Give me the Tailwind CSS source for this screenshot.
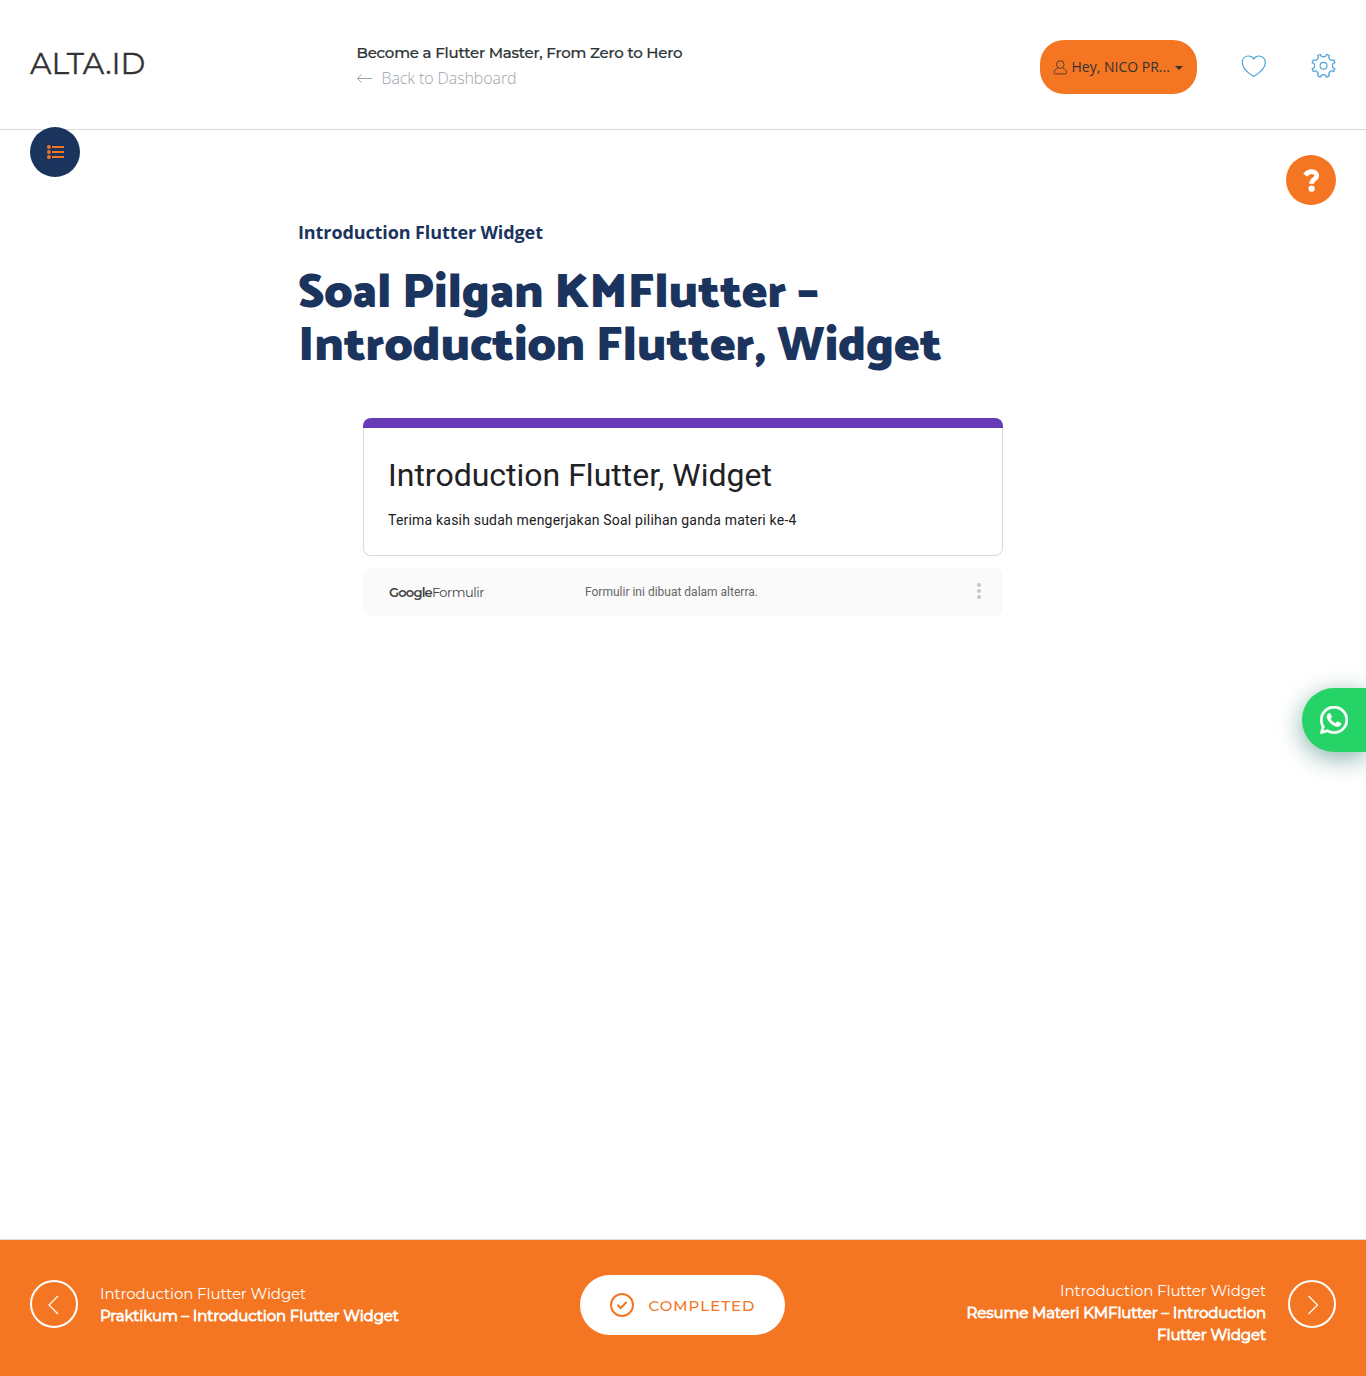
<!DOCTYPE html>
<html lang="id">
<head>
<meta charset="utf-8">
<title>ALTA.ID</title>
<script src="https://cdn.jsdelivr.net/npm/@tailwindcss/browser@4"></script>
</head>
<body class="relative flex h-[1376px] w-[1366px] flex-col overflow-hidden bg-white font-['Open_Sans',sans-serif]">

  <header class="flex h-[130px] shrink-0 items-start border-b border-[#dadada] px-[30px]">
    <div class="mt-[44px] w-[326.500px] font-[Montserrat,Inter,sans-serif] text-[30px] leading-[40px] tracking-[-0.1px] text-[#333] [-webkit-text-stroke:0.3px]">ALTA.ID</div>
    <div class="mt-[41px] w-[683.500px]">
      <div class="whitespace-nowrap font-[Montserrat,Inter,sans-serif] text-[15px] font-medium leading-[24px] tracking-[-0.21px] text-[#2d3436] [-webkit-text-stroke:0.2px]">Become a Flutter Master, From Zero to Hero</div>
      <a class="mt-px flex items-center gap-[9px] text-base font-light leading-[24px] text-[#a0a3ac]">
        <svg class="h-4 w-4" viewBox="0 0 16 16" fill="none" stroke="currentColor" stroke-width="1"><path d="M15 8.5H0.500M4.500 4.500L0.500 8.500L4.500 12.500"/></svg>
        <span class="tracking-[-0.1px]">Back to Dashboard</span>
      </a>
    </div>
    <button class="mt-10 flex h-[54px] w-[157px] items-center rounded-[24px] bg-[#f47622] pl-[13px] text-sm text-[#333]">
      <svg class="h-[15px] w-[15px]" viewBox="0 0 15 15" fill="none" stroke="currentColor" stroke-width="0.8"><circle cx="7.3" cy="4.5" r="3.8"/><path d="M5 8.2C2.500 9 1.100 10.400 1.100 12.600Q1.100 13.900 2.400 13.900H12.200Q13.500 13.900 13.500 12.600C13.500 10.400 12.100 9 9.600 8.200"/></svg>
      <span class="ml-[3.500px] whitespace-nowrap">Hey, NICO PR...</span>
      <svg class="ml-[5.500px] mt-[2px] h-1 w-2" viewBox="0 0 8 4" fill="currentColor"><path d="M0 0H8L4 4Z"/></svg>
    </button>
    <svg class="ml-[44px] mt-[53px] h-[26px] w-[26px] shrink-0" viewBox="0 0 26 26" fill="none" stroke="#4fa3d9" stroke-width="1.200"><path d="M12.700 6C11.500 4 9.700 3 7.500 3C3.700 3 1.300 5.800 1.300 9.400C1.300 14.800 7.500 20.300 12.700 23.400C17.900 20.300 24.300 14.800 24.300 9.400C24.300 5.800 21.700 3 18 3C15.700 3 13.900 4 12.700 6Z"/></svg>
    <svg class="ml-[43px] mt-[53px] h-[26px] w-[26px] shrink-0" viewBox="-13.5 -12.7 26 26" fill="none" stroke="#4fa3d9" stroke-width="1.200" stroke-linejoin="round"><circle r="3.400"/><path d="M-3.050 -11.400A3.100 3.100 0 0 0 3.050 -11.400L5.900 -10.200A3.100 3.100 0 0 0 10.200 -5.900L11.400 -3.050A3.100 3.100 0 0 0 11.400 3.050L10.200 5.900A3.100 3.100 0 0 0 5.900 10.200L3.050 11.400A3.100 3.100 0 0 0 -3.050 11.400L-5.900 10.200A3.100 3.100 0 0 0 -10.200 5.900L-11.400 3.050A3.100 3.100 0 0 0 -11.400 -3.050L-10.200 -5.900A3.100 3.100 0 0 0 -5.900 -10.200Z"/></svg>
  </header>

  <main class="flex-1 pt-[88px]">
    <div class="ml-[298px] w-[770px]">
      <p class="text-lg font-bold leading-[28px] tracking-[-0.1px] text-[#1a345e]">Introduction Flutter Widget</p>
      <h1 class="mt-[21px] whitespace-nowrap font-[Catamaran,'Open_Sans',sans-serif] text-[48px] font-black leading-[53px] text-[#1a345e]">Soal Pilgan KMFlutter –<br>Introduction Flutter, Widget</h1>
    </div>
    <section class="ml-[363px] mt-[45px] w-[640px] font-[Roboto,sans-serif]">
      <div class="h-[10px] rounded-t-lg bg-[#673ab7]"></div>
      <div class="h-[128px] rounded-b-lg border border-t-0 border-[#dadce0] px-[24px] pt-[27px]">
        <h2 class="text-[32px] leading-[40px] text-[#202124]">Introduction Flutter, Widget</h2>
        <p class="mt-[15px] text-sm leading-[20px] tracking-[0.2px] text-[#202124]">Terima kasih sudah mengerjakan Soal pilihan ganda materi ke-4</p>
      </div>
      <div class="mt-3 flex h-12 items-center rounded-lg bg-[#fafafa] pl-[26px] pr-[22px] text-xs text-[#666]">
        <div class="w-[196px] whitespace-nowrap font-[Montserrat,Lato,sans-serif] text-[13px] leading-5 text-[#444]"><span class="font-semibold tracking-[-0.8px]">Google</span><span class="tracking-[-0.5px]">Formulir</span></div>
        <span>Formulir ini dibuat dalam alterra.</span>
        <svg class="mb-0.5 ml-auto h-4 w-1" viewBox="0 0 4 16" fill="#c6c6c6"><circle cx="2" cy="2" r="2"/><circle cx="2" cy="8" r="2"/><circle cx="2" cy="14" r="2"/></svg>
      </div>
    </section>
  </main>

  <footer class="flex h-[137px] shrink-0 items-start border-t border-[#e0dcd8] bg-[#f47622] px-[30px] font-[Montserrat,Inter,sans-serif] text-[15px] leading-[22px] text-white">
    <svg class="mt-10 h-12 w-12" viewBox="0 0 48 48" fill="none" stroke="currentColor"><circle cx="24" cy="24" r="23" stroke-width="2"/><path d="M28 16L19 25L28 34" stroke-width="1.200"/></svg>
    <div class="ml-[22px] mt-[43px] w-[480px] whitespace-nowrap"><div class="tracking-[-0.1px]">Introduction Flutter Widget</div><div class="tracking-[-0.1px] [-webkit-text-stroke:0.8px]">Praktikum – Introduction Flutter Widget</div></div>
    <button class="mt-[35px] flex h-[60px] w-[205px] items-center rounded-[30px] bg-white pl-[29px] text-[#f47622]">
      <svg class="h-[26px] w-[26px]" viewBox="0 0 26 26" fill="none" stroke="currentColor" stroke-width="2"><circle cx="13" cy="13" r="11"/><path d="M8.500 12.800L11.700 16L17.600 10"/></svg>
      <span class="ml-[13.5px] mt-0.5 font-medium tracking-[1px]">COMPLETED</span>
    </button>
    <div class="ml-auto mt-10 whitespace-nowrap text-right"><div class="tracking-[-0.1px]">Introduction Flutter Widget</div><div class="tracking-[-0.1px] [-webkit-text-stroke:0.8px]">Resume Materi KMFlutter – Introduction<br>Flutter Widget</div></div>
    <svg class="ml-[22px] mt-10 h-12 w-12" viewBox="0 0 48 48" fill="none" stroke="currentColor"><circle cx="24" cy="24" r="23" stroke-width="2"/><path d="M20.500 16L29.500 25L20.500 34" stroke-width="1.200"/></svg>
  </footer>

  <button class="absolute left-[30px] top-[127px] flex h-[50px] w-[50px] items-center justify-center rounded-full bg-[#1a345e]">
    <svg class="h-[14px] w-[17px]" viewBox="0 0 17 14" fill="#f47622"><circle cx="1.900" cy="2" r="1.900"/><circle cx="1.900" cy="7" r="1.900"/><circle cx="1.900" cy="12" r="1.900"/><path d="M5 1H17V3H5ZM5 6H17V8H5ZM5 11H17V13H5Z"/></svg>
  </button>
  <button class="absolute left-[1286px] top-[155px] flex h-[50px] w-[50px] items-center justify-center rounded-full bg-[#f47622]">
    <svg class="mt-px h-[23px] w-[17px]" viewBox="0 0 17 23" fill="none" stroke="white"><path d="M2.200 6.200C4.300 3.300 6.400 2.700 8.700 2.700C11.800 2.700 13.700 4.300 13.700 6.700C13.700 10.400 8.600 10 8.600 14.800" stroke-width="4.800"/><circle cx="8.600" cy="19.700" r="3.100" fill="white" stroke="none"/></svg>
  </button>
  <a class="absolute left-[1302px] top-[688px] flex h-16 w-16 items-center rounded-l-[32px] bg-[#25d366] pl-[18px] shadow-[0_6px_24px_rgba(7,94,84,0.480)]">
    <svg class="h-[28px] w-[28px]" viewBox="0 0 448 448" fill="white" stroke="white" stroke-width="8"><path d="M380.900 65.100C339 23.100 283.200 0 223.900 0 101.500 0 1.900 99.600 1.900 222c0 39.100 10.200 77.300 29.600 111L0 448l117.700-30.900c32.400 17.700 68.900 27 106.100 27h.1c122.300 0 224.100-99.600 224.100-222 0-59.300-25.200-115-67.100-157zM223.900 406.700c-33.200 0-65.700-8.900-94-25.700l-6.700-4-69.800 18.300L72 327.200l-4.400-7c-18.500-29.400-28.200-63.300-28.200-98.200 0-101.700 82.800-184.500 184.600-184.500 49.300 0 95.600 19.200 130.400 54.100s56.200 81.200 56.100 130.500c0 101.800-84.900 184.600-186.600 184.600zm101.200-138.200c-5.500-2.800-32.800-16.200-37.900-18-5.100-1.900-8.800-2.800-12.500 2.800s-14.300 18-17.600 21.800c-3.200 3.700-6.500 4.200-12 1.400-32.600-16.300-54-29.100-75.500-66-5.700-9.800 5.700-9.100 16.300-30.300 1.800-3.700.9-6.900-.5-9.700s-12.500-30.100-17.100-41.200c-4.500-10.800-9.100-9.300-12.500-9.500-3.200-.2-6.900-.2-10.600-.2s-9.700 1.400-14.800 6.900c-5.100 5.600-19.400 19-19.400 46.300s19.900 53.700 22.600 57.400c2.800 3.700 39.100 59.700 94.800 83.800 35.200 15.200 49 16.500 66.600 13.900 10.700-1.600 32.800-13.400 37.400-26.400s4.600-24.100 3.200-26.400c-1.300-2.500-5-3.900-10.500-6.600z"/></svg>
  </a>
</body>
</html>
